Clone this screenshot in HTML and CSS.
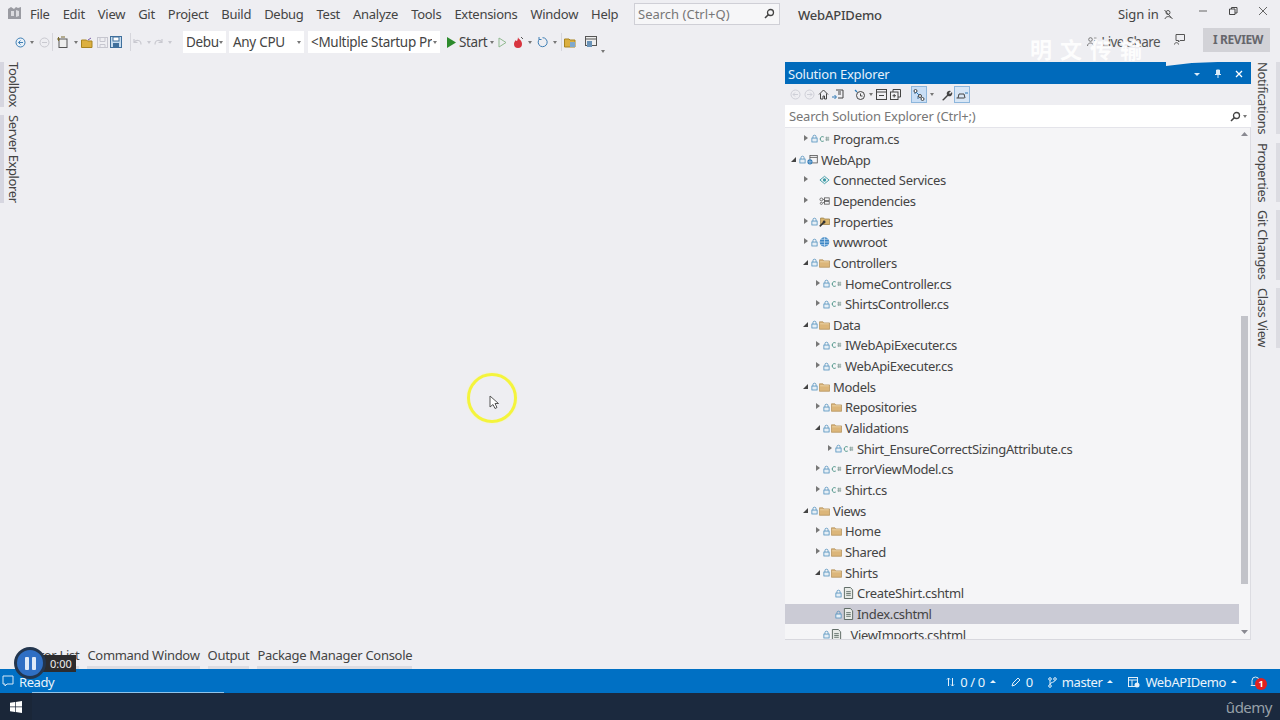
FILE: index.html
```html
<!DOCTYPE html>
<html lang="en">
<head>
<meta charset="utf-8">
<title>WebAPIDemo</title>
<link rel="stylesheet" href="styles.css">
</head>
<body>
<svg class="defs" width="0" height="0">
  <symbol id="lock" viewBox="0 0 8 10"><path d="M2.200 4.500V3a1.800 1.800 0 0 1 3.600 0v1.500" fill="none" stroke="#4f8fbd" stroke-width=".9"/><rect x="1" y="4.500" width="6" height="4.500" fill="#e6eff6" stroke="#4f8fbd" stroke-width=".9"/></symbol>
  <symbol id="cs" viewBox="0 0 14 10"><path d="M6 2.400A3 3 0 1 0 6 7.600" fill="none" stroke="#3d8a7c" stroke-width="1.200"/><path d="M8 3.600h5M8 6h5M9.600 2v5.600M11.600 2v5.600" fill="none" stroke="#7f9c96" stroke-width=".9"/></symbol>
  <symbol id="folder" viewBox="0 0 14 12"><path d="M.5 2h4.500l1 1.400h7.500v8H.5z" fill="#dcb67a" stroke="#b4935c"/><path d="M1.500 4.500h11" stroke="#efd9ae"/></symbol>
  <symbol id="page" viewBox="0 0 12 13"><path d="M1.500.5h6.500l2.500 2.500v9.500h-9z" fill="#e8ebe8" stroke="#55625c"/><path d="M3.500 5h5M3.500 7h5M3.500 9h5" stroke="#5f6f68"/></symbol>
  <symbol id="project" viewBox="0 0 15 13"><rect x="4" y=".5" width="10" height="10" fill="#f4f4f6" stroke="#444"/><path d="M4 3h10" stroke="#444"/><circle cx="4" cy="9" r="3.500" fill="#2f79b5"/><path d="M1 9h6M4 6v6" stroke="#cfe3f3" stroke-width=".7"/></symbol>
  <symbol id="globe" viewBox="0 0 12 12"><circle cx="6" cy="6" r="5.200" fill="#3a84c4"/><path d="M1 6h10M6 1v10M2 3h8M2 9h8" stroke="#d6e8f6" stroke-width=".8"/></symbol>
  <symbol id="connected" viewBox="0 0 12 10"><path d="M1 5l5-4 5 4-5 4z" fill="none" stroke="#3c9aa5"/><circle cx="6" cy="5" r="1.800" fill="#3c9aa5"/></symbol>
  <symbol id="deps" viewBox="0 0 14 10"><circle cx="3" cy="3" r="1.800" fill="none" stroke="#555"/><circle cx="3" cy="8" r="1.400" fill="none" stroke="#555"/><rect x="7" y="1" width="6" height="3.500" fill="none" stroke="#555"/><rect x="7" y="5.500" width="6" height="3.500" fill="none" stroke="#555"/><path d="M5 3h2M5 7h2" stroke="#555"/></symbol>
  <symbol id="props" viewBox="0 0 14 13"><path d="M2 1.500h4l1 1.200h6.500v7H2z" fill="#d8b56e" stroke="#9c8148"/><path d="M1 12l5-5" stroke="#333" stroke-width="2"/><circle cx="6.500" cy="6.500" r="1.800" fill="#333"/></symbol>
</svg>

<header class="titlebar">
  <svg class="vs-logo" width="16" height="16" viewBox="0 0 16 16"><path d="M1 4l3-2 3 2 2-2 2 1 3-1v12H1z" fill="#9a9ba2"/><path d="M4 6h3v5H4zM9 5l3 1v5l-3 1z" fill="#dcdce0"/></svg>
  <nav class="menu">
    <span>File</span><span>Edit</span><span>View</span><span>Git</span><span>Project</span><span>Build</span><span>Debug</span><span>Test</span><span>Analyze</span><span>Tools</span><span>Extensions</span><span>Window</span><span>Help</span>
  </nav>
  <div class="quick">
    <span>Search (Ctrl+Q)</span>
    <svg width="11" height="11" viewBox="0 0 11 11"><circle cx="6.500" cy="4.500" r="3" fill="none" stroke="#444" stroke-width="1.300"/><path d="M4.500 6.500L1 10" stroke="#444" stroke-width="1.600"/></svg>
  </div>
  <div class="sol-name">WebAPIDemo</div>
  <div class="signin">
    <span>Sign in</span>
    <svg width="11" height="11" viewBox="0 0 11 11"><circle cx="5" cy="3.500" r="2" fill="none" stroke="#555"/><path d="M1.500 1L9.500 10M2 10c.5-3 5-3 6-1" fill="none" stroke="#555"/></svg>
  </div>
  <div class="winctl">
    <svg width="10" height="10" viewBox="0 0 10 10"><path d="M1 5h8" stroke="#666"/></svg>
    <svg width="10" height="10" viewBox="0 0 10 10"><path d="M1.500 3h5.500v5.500H1.500zM3.500 3V1.500H9V7H7" fill="none" stroke="#444"/></svg>
    <svg width="10" height="10" viewBox="0 0 10 10"><path d="M1 1l8 8M9 1l-8 8" stroke="#666"/></svg>
  </div>
</header>

<div class="toolbar">
  <svg width="11" height="11" viewBox="0 0 11 11"><circle cx="5.500" cy="5.500" r="4.500" fill="#e8f0f8" stroke="#3f7fb5"/><path d="M8 5.500H3.500M5.500 3.500l-2 2 2 2" fill="none" stroke="#3f7fb5"/></svg>
  <span class="caret m4"></span>
  <svg class="m5" width="11" height="11" viewBox="0 0 11 11"><circle cx="5.500" cy="5.500" r="4.500" fill="none" stroke="#c9c9d0"/><path d="M3 5.500h5" stroke="#c9c9d0"/></svg>
  <i class="sep m2"></i>
  <svg class="m3" width="13" height="12" viewBox="0 0 13 12"><rect x="3" y="3" width="8" height="8.500" fill="#eee" stroke="#555"/><path d="M1 3h3M2.500 1v4M5 1h4" stroke="#7a6a2e"/></svg>
  <span class="caret m5"></span>
  <svg class="m3" width="12" height="11" viewBox="0 0 12 11"><path d="M.5 3h5l1 1h4.500v6.500H.5z" fill="#dcb040" stroke="#a88420"/><path d="M7 3l3-2" stroke="#7a5ea8"/></svg>
  <svg class="m4" width="11" height="11" viewBox="0 0 11 11"><rect x=".5" y=".5" width="10" height="10" fill="none" stroke="#c6c6cf"/><path d="M3 .5v4h5v-4M3 10.500v-3h5v3" fill="none" stroke="#c6c6cf"/></svg>
  <svg class="m2" width="12" height="12" viewBox="0 0 12 12"><rect x=".5" y=".5" width="11" height="11" fill="#c7dcef" stroke="#3f6f9c"/><rect x="3" y="1" width="6" height="4" fill="#fff" stroke="#3f6f9c"/><rect x="3" y="7" width="6" height="4.500" fill="#3f6f9c"/></svg>
  <i class="sep m8"></i>
  <svg width="12" height="11" viewBox="0 0 12 11"><path d="M3 5.500c2-3 7-3 7 2M3 2v3.500h3.500" fill="none" stroke="#c9c9d0" stroke-width="1.200"/></svg>
  <span class="caret pale m4"></span>
  <svg class="m2" width="12" height="11" viewBox="0 0 12 11"><path d="M9 5.500c-2-3-7-3-7 2M9 2v3.500H5.500" fill="none" stroke="#c9c9d0" stroke-width="1.200"/></svg>
  <span class="caret pale m3"></span>
  <div class="combo debug m11"><span>Debu</span><span class="caret"></span></div>
  <div class="combo cpu m3"><span>Any CPU</span><span class="caret"></span></div>
  <div class="combo startup m4"><span class="combo-text">&lt;Multiple Startup Projects&gt;</span><span class="caret"></span></div>
  <svg class="m7" width="9" height="11" viewBox="0 0 9 11"><path d="M0 0l9 5.500L0 11z" fill="#2c8a2c"/></svg>
  <span class="start m3">Start</span>
  <span class="caret m3"></span>
  <svg class="m4" width="9" height="11" viewBox="0 0 9 11"><path d="M1 1l7 4.500L1 10z" fill="none" stroke="#8fb98f"/></svg>
  <svg class="m5" width="12" height="13" viewBox="0 0 12 13"><path d="M6 1c0 2 4 3 4 7a4 4 0 0 1-8 0c0-2 1-3 2-4 0 1 1 1 1 1s1-2 1-4z" fill="#d8343f"/><path d="M9 1l2 2" stroke="#555"/></svg>
  <span class="caret m4"></span>
  <svg class="m5" width="12" height="12" viewBox="0 0 12 12"><path d="M2.500 3a4.500 4.500 0 1 0 3-1.300M2 1v2.500h2.500" fill="none" stroke="#3f7fb5"/></svg>
  <span class="caret m4"></span>
  <i class="sep m4"></i>
  <svg class="m2" width="12" height="11" viewBox="0 0 12 11"><path d="M.5 2h4.500l1 1h5v7H.5z" fill="#dcb040" stroke="#a88420"/><rect x="6" y="5" width="5" height="5" fill="#7fa8cc"/></svg>
  <svg class="m9" width="12" height="12" viewBox="0 0 12 12"><rect x=".5" y=".5" width="11" height="9" fill="#eee" stroke="#555"/><path d="M.5 3h11" stroke="#555"/><rect x="2" y="5" width="5" height="6" fill="#6a93b8"/></svg>
  <span class="caret tiny m4"></span>
  <div class="tb-right">
    <svg width="10" height="10" viewBox="0 0 10 10"><circle cx="3.500" cy="2.500" r="1.800" fill="none" stroke="#777"/><path d="M.5 9c0-4 6-4 6 0" fill="none" stroke="#777"/><path d="M7 1h2.500M7 3.500h2.500" stroke="#999"/></svg>
    <span class="live">Live Share</span>
    <svg class="fb" width="11" height="11" viewBox="0 0 11 11"><path d="M2 .5h8.500v6H6L4.500 8V6.500H2z" fill="none" stroke="#555"/><path d="M.5 10.500c0-2.500 4-2.500 4 0" fill="none" stroke="#555"/></svg>
    <span class="review">I REVIEW</span>
  </div>
</div>

<main class="workspace">
  <div class="upper">
    <aside class="rail left">
      <span class="vtab">Toolbox</span>
      <span class="vtab">Server Explorer</span>
    </aside>
    <section class="document"></section>
    <section class="solution">
      <div class="sol-head">
        <span>Solution Explorer</span>
        <div class="sol-ctl">
          <svg width="8" height="8" viewBox="0 0 8 8"><path d="M1 3h6L4 6z" fill="#dcecf8"/></svg>
          <svg width="8" height="10" viewBox="0 0 8 10"><path d="M2.500 1h3v4h-3zM1 5.500h6M4 5.500V9" fill="#dcecf8" stroke="#dcecf8"/></svg>
          <svg width="8" height="8" viewBox="0 0 8 8"><path d="M1 1l6 6M7 1L1 7" stroke="#fff" stroke-width="1.300"/></svg>
        </div>
      </div>
      <div class="sol-tools">
        <svg width="11" height="11" viewBox="0 0 11 11"><circle cx="5.500" cy="5.500" r="4.500" fill="none" stroke="#cfd0d8"/><path d="M8 5.500H3M5 3.500l-2 2 2 2" fill="none" stroke="#cfd0d8"/></svg>
        <svg width="11" height="11" viewBox="0 0 11 11"><circle cx="5.500" cy="5.500" r="4.500" fill="none" stroke="#cfd0d8"/><path d="M3 5.500h5M6 3.500l2 2-2 2" fill="none" stroke="#cfd0d8"/></svg>
        <svg width="11" height="11" viewBox="0 0 11 11"><path d="M1 5.500L5.500 1 10 5.500M2.500 4.500V10h2.500V7h1.500v3H8.500V4.500" fill="none" stroke="#444"/></svg>
        <svg width="12" height="11" viewBox="0 0 12 11"><path d="M4 1h7v8H6" fill="none" stroke="#444"/><path d="M6 3h3M6 5h3" stroke="#444"/><path d="M0 8h4M2.500 6l2 2-2 2" fill="none" stroke="#2f79b5"/></svg>
        <i class="st-gap"></i>
        <svg width="12" height="12" viewBox="0 0 12 12"><circle cx="6.500" cy="6.500" r="4" fill="none" stroke="#444"/><path d="M6.500 4.500v2.500h2" fill="none" stroke="#444"/><path d="M1 1l2 2" stroke="#2f79b5" stroke-width="1.300"/></svg>
        <span class="caret"></span>
        <svg width="11" height="11" viewBox="0 0 11 11"><rect x=".5" y=".5" width="10" height="10" fill="none" stroke="#444"/><path d="M.5 3h10M3 6.500h5" stroke="#444"/></svg>
        <svg width="11" height="11" viewBox="0 0 11 11"><path d="M3 3V.5h7.500v7.500H8" fill="none" stroke="#444"/><rect x=".5" y="3" width="7.500" height="7.500" fill="#f1f1f4" stroke="#444"/><path d="M4.200 5v3.500M2.500 6.700H6" stroke="#444"/></svg>
        <i class="st-gap"></i>
        <span class="tool-on"><svg width="12" height="12" viewBox="0 0 12 12"><path d="M2 1v4M2 2h2M5 7v3" fill="none" stroke="#3a6a94"/><circle cx="2.500" cy="2" r="1.500" fill="#fff" stroke="#444"/><circle cx="7" cy="7" r="1.500" fill="#fff" stroke="#444"/><circle cx="9.500" cy="10" r="1.500" fill="#fff" stroke="#444"/><path d="M3 3l3 3" stroke="#2f79b5"/></svg></span>
        <span class="caret"></span>
        <svg class="wrench" width="12" height="12" viewBox="0 0 12 12"><path d="M1 11l5-5a3 3 0 0 1 4-4L8 4l1 1 2-2a3 3 0 0 1-4 4l-4.500 4.500z" fill="#444"/></svg>
        <span class="tool-on wide"><svg width="12" height="8" viewBox="0 0 12 8"><path d="M.5 7h8M2 7l1-4h5l1 4" fill="none" stroke="#444"/><path d="M9 2h3" stroke="#2f79b5"/></svg></span>
      </div>
      <div class="sol-search">
        <span>Search Solution Explorer (Ctrl+;)</span>
        <svg width="11" height="11" viewBox="0 0 11 11"><circle cx="6.500" cy="4.500" r="3" fill="none" stroke="#444" stroke-width="1.300"/><path d="M4.500 6.500L1 10" stroke="#444" stroke-width="1.600"/></svg>
        <span class="caret"></span>
      </div>
      <div class="tree-wrap">
        <ul class="tree">
          <li class="row l1"><i class="ar"></i><svg class="lk"><use href="#lock"/></svg><svg class="ic"><use href="#cs"/></svg><span>Program.cs</span></li>
          <li class="row l0"><i class="ar open"></i><svg class="lk"><use href="#lock"/></svg><svg class="ic"><use href="#project"/></svg><span>WebApp</span></li>
          <li class="row l1"><i class="ar"></i><i class="nolk"></i><svg class="ic"><use href="#connected"/></svg><span>Connected Services</span></li>
          <li class="row l1"><i class="ar"></i><i class="nolk"></i><svg class="ic"><use href="#deps"/></svg><span>Dependencies</span></li>
          <li class="row l1"><i class="ar"></i><svg class="lk"><use href="#lock"/></svg><svg class="ic"><use href="#props"/></svg><span>Properties</span></li>
          <li class="row l1"><i class="ar"></i><svg class="lk"><use href="#lock"/></svg><svg class="ic"><use href="#globe"/></svg><span>wwwroot</span></li>
          <li class="row l1"><i class="ar open"></i><svg class="lk"><use href="#lock"/></svg><svg class="ic"><use href="#folder"/></svg><span>Controllers</span></li>
          <li class="row l2"><i class="ar"></i><svg class="lk"><use href="#lock"/></svg><svg class="ic"><use href="#cs"/></svg><span>HomeController.cs</span></li>
          <li class="row l2"><i class="ar"></i><svg class="lk"><use href="#lock"/></svg><svg class="ic"><use href="#cs"/></svg><span>ShirtsController.cs</span></li>
          <li class="row l1"><i class="ar open"></i><svg class="lk"><use href="#lock"/></svg><svg class="ic"><use href="#folder"/></svg><span>Data</span></li>
          <li class="row l2"><i class="ar"></i><svg class="lk"><use href="#lock"/></svg><svg class="ic"><use href="#cs"/></svg><span>IWebApiExecuter.cs</span></li>
          <li class="row l2"><i class="ar"></i><svg class="lk"><use href="#lock"/></svg><svg class="ic"><use href="#cs"/></svg><span>WebApiExecuter.cs</span></li>
          <li class="row l1"><i class="ar open"></i><svg class="lk"><use href="#lock"/></svg><svg class="ic"><use href="#folder"/></svg><span>Models</span></li>
          <li class="row l2"><i class="ar"></i><svg class="lk"><use href="#lock"/></svg><svg class="ic"><use href="#folder"/></svg><span>Repositories</span></li>
          <li class="row l2"><i class="ar open"></i><svg class="lk"><use href="#lock"/></svg><svg class="ic"><use href="#folder"/></svg><span>Validations</span></li>
          <li class="row l3"><i class="ar"></i><svg class="lk"><use href="#lock"/></svg><svg class="ic"><use href="#cs"/></svg><span>Shirt_EnsureCorrectSizingAttribute.cs</span></li>
          <li class="row l2"><i class="ar"></i><svg class="lk"><use href="#lock"/></svg><svg class="ic"><use href="#cs"/></svg><span>ErrorViewModel.cs</span></li>
          <li class="row l2"><i class="ar"></i><svg class="lk"><use href="#lock"/></svg><svg class="ic"><use href="#cs"/></svg><span>Shirt.cs</span></li>
          <li class="row l1"><i class="ar open"></i><svg class="lk"><use href="#lock"/></svg><svg class="ic"><use href="#folder"/></svg><span>Views</span></li>
          <li class="row l2"><i class="ar"></i><svg class="lk"><use href="#lock"/></svg><svg class="ic"><use href="#folder"/></svg><span>Home</span></li>
          <li class="row l2"><i class="ar"></i><svg class="lk"><use href="#lock"/></svg><svg class="ic"><use href="#folder"/></svg><span>Shared</span></li>
          <li class="row l2"><i class="ar open"></i><svg class="lk"><use href="#lock"/></svg><svg class="ic"><use href="#folder"/></svg><span>Shirts</span></li>
          <li class="row l3"><i class="ar none"></i><svg class="lk"><use href="#lock"/></svg><svg class="ic"><use href="#page"/></svg><span>CreateShirt.cshtml</span></li>
          <li class="row l3 selected"><i class="ar none"></i><svg class="lk"><use href="#lock"/></svg><svg class="ic"><use href="#page"/></svg><span>Index.cshtml</span></li>
          <li class="row l2"><i class="ar none"></i><svg class="lk"><use href="#lock"/></svg><svg class="ic"><use href="#page"/></svg><span>_ViewImports.cshtml</span></li>
        </ul>
        <div class="scrollbar">
          <svg width="7" height="4" viewBox="0 0 7 4"><path d="M0 4l3.500-4L7 4z" fill="#8a8a92"/></svg>
          <div class="sb-track"><div class="sb-thumb"></div></div>
          <svg width="7" height="4" viewBox="0 0 7 4"><path d="M0 0l3.500 4L7 0z" fill="#8a8a92"/></svg>
        </div>
      </div>
    </section>
    <aside class="rail right">
      <span class="vtab">Notifications</span>
      <span class="vtab">Properties</span>
      <span class="vtab">Git Changes</span>
      <span class="vtab">Class View</span>
    </aside>
  </div>
  <div class="bottom-tabs">
    <span>Error List</span><span>Command Window</span><span>Output</span><span>Package Manager Console</span>
  </div>
</main>

<footer class="status">
  <svg class="bubble" width="12" height="12" viewBox="0 0 12 12"><path d="M1 1h10v8H5l-2 2V9H1z" fill="none" stroke="#d6e8f6"/></svg>
  <span class="ready">Ready</span>
  <div class="st-right">
    <span class="st-item"><svg width="9" height="10" viewBox="0 0 9 10"><path d="M2.500 9V1M1 2.500L2.500 1 4 2.500M6.500 1v8M5 7.500L6.500 9 8 7.500" fill="none" stroke="#e4f0fa"/></svg>0 / 0<i class="up"></i></span>
    <span class="st-item"><svg width="10" height="10" viewBox="0 0 10 10"><path d="M1 9l1-3 5-5 2 2-5 5z" fill="none" stroke="#e4f0fa"/></svg>0</span>
    <span class="st-item"><svg width="9" height="11" viewBox="0 0 9 11"><circle cx="2" cy="2" r="1.300" fill="none" stroke="#e4f0fa"/><circle cx="2" cy="9" r="1.300" fill="none" stroke="#e4f0fa"/><circle cx="7" cy="2" r="1.300" fill="none" stroke="#e4f0fa"/><path d="M2 3.500v4M7 3.500c0 2-5 1.500-5 4" fill="none" stroke="#e4f0fa"/></svg>master<i class="up"></i></span>
    <span class="st-item last"><svg width="12" height="11" viewBox="0 0 12 11"><rect x=".5" y=".5" width="9" height="9" fill="none" stroke="#e4f0fa"/><path d="M.5 3h9M4 3v6" stroke="#e4f0fa"/><circle cx="9" cy="8" r="2.500" fill="#e4f0fa"/></svg>WebAPIDemo<i class="up"></i></span>
    <span class="bell"><svg width="11" height="12" viewBox="0 0 11 12"><path d="M2 8.500V4.500a3.500 3.500 0 0 1 7 0v4l1 1H1z" fill="none" stroke="#d6e8f6"/></svg><b class="badge">1</b></span>
  </div>
</footer>

<footer class="taskbar">
  <div class="start-tile">
    <svg width="12" height="12" viewBox="0 0 12 12"><path d="M0 1.700l5-.7v4.600H0zM5.700.9L12 0v5.600H5.700zM0 6.300h5V11l-5-.7zM5.700 6.300H12V12l-6.300-.9z" fill="#fff"/></svg>
  </div>
  <span class="udemy">ûdemy</span>
</footer>

<div class="progress-line"></div>
<div class="player"><span class="pause"><i></i><i></i></span><span class="clock">0:00</span></div>
<div class="cursor-ring"><svg width="10" height="15" viewBox="0 0 10 15"><path d="M1 1v11l3-2.500 2 4 2-1-2-4h3.500z" fill="#fff" stroke="#555"/></svg></div>
<div class="watermark">明文传输</div>
<div class="watermark-tail"></div>
</body>
</html>
```
FILE: styles.css
```css
* { box-sizing: border-box; }
html, body { margin: 0; padding: 0; }
body {
  width: 1280px;
  height: 720px;
  overflow: hidden;
  position: relative;
  display: flex;
  flex-direction: column;
  background: #eeeef2;
  color: #444;
  font-family: "Noto Sans", "Open Sans", sans-serif;
  font-size: 13px;
}
.defs { position: absolute; }
svg { flex: none; display: block; }
i { font-style: normal; }

.m2 { margin-left: 2px; }
.m3 { margin-left: 3px; }
.m4 { margin-left: 4px; }
.m5 { margin-left: 5px; }
.m7 { margin-left: 7px; }
.m8 { margin-left: 8px; }
.m9 { margin-left: 9px; }
.m11 { margin-left: 11px; }

.caret { width: 0; height: 0; flex: none; border-left: 2.500px solid transparent; border-right: 2.500px solid transparent; border-top: 3px solid #777; }
.caret.pale { border-top-color: #c9c9d0; }
.caret.tiny { align-self: flex-end; margin-bottom: 3px; }

/* Title bar */
.titlebar { height: 28px; flex: none; display: flex; align-items: center; padding-left: 7px; }
.vs-logo { margin-right: 7px; margin-top: -3px; }
.menu { display: flex; gap: 13px; width: 604px; letter-spacing: -.28px; }
.quick { width: 146px; height: 22px; margin-top: -1px; background: #f6f6f8; border: 1px solid #cfcfd6; display: flex; align-items: center; justify-content: space-between; padding: 0 4px 0 3px; color: #777; }
.sol-name { margin-left: 18px; width: 320px; font-weight: 500; color: #444; margin-top: 2px; letter-spacing: -.2px; }
.signin { display: flex; align-items: center; gap: 4px; width: 68px; letter-spacing: -.1px; }
.winctl { display: flex; gap: 20px; margin-left: 12px; margin-top: -6px; }

/* Toolbar */
.toolbar { height: 28px; flex: none; display: flex; align-items: center; padding-left: 15px; padding-right: 10px; }
.sep { width: 1px; height: 18px; background: #d6d6dc; flex: none; }
.combo { height: 22px; background: #fff; display: flex; align-items: center; justify-content: space-between; padding: 0 3px; overflow: hidden; flex: none; font-size: 13.500px; letter-spacing: -.3px; }
.combo.debug { width: 43px; }
.combo.cpu { width: 75px; padding-left: 4px; }
.combo.startup { width: 132px; }
.combo-text { width: 121px; overflow: hidden; white-space: nowrap; }
.start { font-size: 13.500px; letter-spacing: -.4px; }
.tb-right { margin-left: auto; display: flex; align-items: center; }
.live { margin-left: 4px; font-size: 13.500px; letter-spacing: -.6px; color: #555; }
.fb { margin: -6px 0 0 14px; }
.review { margin-left: 18px; width: 67px; height: 24px; margin-top: -4px; background: #d2d2d7; color: #66666c; font-size: 12px; font-weight: 700; line-height: 24px; text-align: right; padding-right: 7px; letter-spacing: -.4px; white-space: nowrap; }

/* Workspace */
.workspace { flex: 1; min-height: 0; display: flex; flex-direction: column; }
.upper { flex: 1; min-height: 0; display: flex; }
.document { flex: 1; }
.rail { display: flex; flex-direction: column; padding-top: 6px; gap: 8px; }
.rail.left { width: 22px; }
.rail.right { width: 29px; gap: 8.500px; }
.vtab { writing-mode: vertical-rl; white-space: nowrap; line-height: 16px; letter-spacing: -.4px; }
.rail.left .vtab { border-left: 4px solid #d6d6e0; padding-left: 2px; }
.rail.right .vtab { padding-right: 5px; border-right: 4px solid #dcdce2; }

/* Solution explorer */
.solution { width: 466px; margin: 6px 0 7px; display: flex; flex-direction: column; background: #f5f5f7; }
.sol-head { height: 22px; flex: none; background: #006abb; color: #e6f1fa; display: flex; align-items: center; justify-content: space-between; padding: 1px 8px 0 3px; letter-spacing: -.2px; }
.sol-ctl { display: flex; align-items: center; gap: 13px; }
.sol-tools { height: 21px; flex: none; display: flex; align-items: center; gap: 3px; padding-left: 5px; background: #eeeef2; }
.st-gap { width: 4px; }
.tool-on { width: 16px; height: 17px; background: #c9def5; display: flex; align-items: center; justify-content: center; border: 1px solid #8db6dc; }
.tool-on.wide { background: #d8e6f5; margin-left: -2px; }
.wrench { margin-left: 4px; }
.sol-search { height: 22px; flex: none; background: #fff; display: flex; align-items: center; padding: 0 4px 0 4px; color: #777; gap: 2px; letter-spacing: -.2px; }
.sol-search span:first-child { flex: 1; }
.tree-wrap { flex: 1; min-height: 0; display: flex; border-top: 1px solid #e4e4ea; border-bottom: 1px solid #d8d8de; border-right: 1px solid #dcdce2; position: relative; }
.tree { list-style: none; margin: 0; padding: .6px 0 0; flex: 1; min-width: 0; overflow: hidden; }
.row { height: 20.670px; display: flex; align-items: center; white-space: nowrap; }
.row.l0 { padding-left: 6px; }
.row.l1 { padding-left: 18px; }
.row.l2 { padding-left: 30px; }
.row.l3 { padding-left: 42px; }
.row span { margin-left: 3px; letter-spacing: -.33px; }
.row.selected { background: #cbcbd5; }
.ar { width: 8px; height: 8px; flex: none; position: relative; }
.ar::before { content: ""; position: absolute; left: 1px; top: 0; border-left: 4px solid #777; border-top: 3.500px solid transparent; border-bottom: 3.500px solid transparent; }
.ar.open::before { left: 0; top: 1px; border: 0; border-right: 5px solid #444; border-top: 5px solid transparent; }
.ar.none::before { display: none; }
.nolk { width: 8px; flex: none; }
.lk { width: 7px; height: 9px; margin-right: 1px; }
.ic { width: 11px; height: 12px; }

.scrollbar { width: 11px; flex: none; display: flex; flex-direction: column; align-items: center; padding: 4px 0 5px; background: #f5f5f7; }
.sb-track { flex: 1; width: 100%; padding-top: 180px; padding-bottom: 46px; display: flex; justify-content: center; }
.sb-thumb { width: 7px; background: #c2c3c9; }

/* Bottom tabs */
.bottom-tabs { height: 22px; flex: none; display: flex; gap: 8px; padding-left: 27px; }
.bottom-tabs span { border-bottom: 3px solid #dcdce2; height: 22px; line-height: 17px; letter-spacing: -.3px; }

/* Status bar */
.status { height: 24px; flex: none; background: #0070c4; color: #eaf4fb; display: flex; align-items: center; padding: 2px 0 0 2px; letter-spacing: -.4px; }
.bubble { margin-right: 5px; margin-top: -3px; }
.st-right { margin-left: auto; display: flex; align-items: center; }
.st-item { display: flex; align-items: center; gap: 5px; margin-right: 15px; }
.st-item.last { margin-right: 13px; }
.up { width: 0; height: 0; border-left: 3px solid transparent; border-right: 3px solid transparent; border-bottom: 3px solid #eaf4fb; margin-top: -2px; }
.bell { position: relative; width: 30px; display: block; }
.badge { position: absolute; left: 5px; top: 2px; width: 12px; height: 12px; border-radius: 50%; background: #e02020; color: #fff; font-size: 9px; line-height: 12px; text-align: center; font-weight: 700; letter-spacing: 0; }

/* Taskbar */
.taskbar { height: 27px; flex: none; background: #1b293e; display: flex; align-items: center; justify-content: space-between; }
.start-tile { width: 32px; height: 27px; display: flex; align-items: center; justify-content: center; background: #1a2638; }
.udemy { color: #97a0a8; font-size: 15px; margin-right: 8px; letter-spacing: -.5px; }

/* Overlays */
.progress-line { position: absolute; left: 32px; top: 692px; width: 192px; height: 1px; background: #8fc3ea; }
.player { position: absolute; left: 14px; top: 647px; display: flex; align-items: center; }
.pause { width: 32px; height: 32px; border-radius: 50%; background: #2f6fc4; border: 3px solid #23364f; display: flex; align-items: center; justify-content: center; gap: 3px; position: relative; z-index: 1; }
.pause i { width: 4px; height: 13px; background: #dfeaf8; border-radius: 1px; }
.clock { background: #2c2c2e; color: #eee; font-size: 11px; line-height: 17px; padding: 0 0 0 7px; margin: 0 0 0 -3px; width: 33px; }
.cursor-ring { position: absolute; left: 467px; top: 373px; width: 50px; height: 50px; border-radius: 50%; border: 3px solid #f4f43c; box-shadow: 0 0 2px #f8f8a0; display: flex; align-items: center; justify-content: center; padding: 8px 0 0 4px; }
.watermark { position: absolute; left: 1030px; top: 32px; color: #fff; opacity: .9; font-family: "Noto Sans CJK SC", sans-serif; font-weight: 700; font-size: 22px; letter-spacing: 8px; }
.watermark-tail { position: absolute; left: 1166px; top: 61px; width: 86px; height: 5px; background: #eeeef2; clip-path: polygon(0 100%, 30% 40%, 60% 20%, 100% 0, 0 0); }
```
